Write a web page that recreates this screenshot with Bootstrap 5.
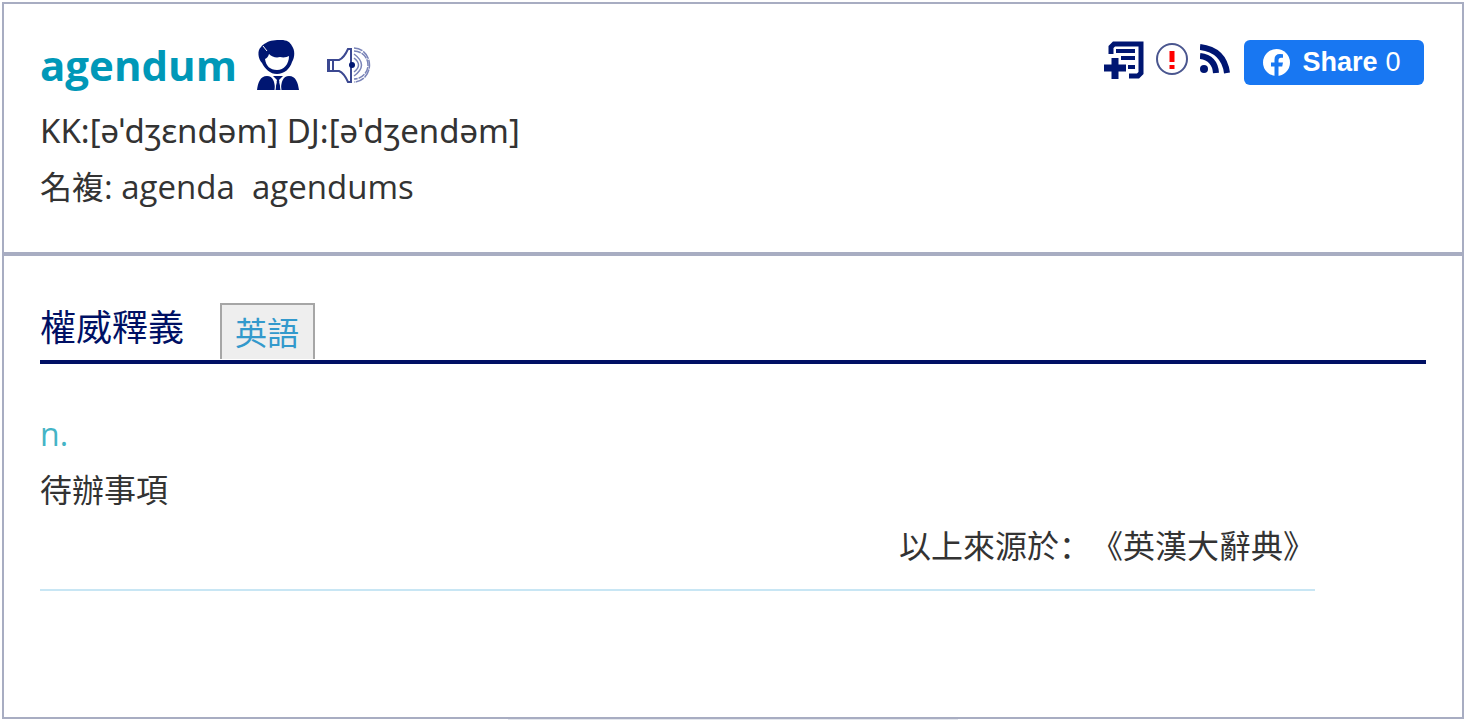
<!DOCTYPE html>
<html lang="zh-Hant">
<head>
<meta charset="utf-8">
<meta name="viewport" content="width=device-width, initial-scale=1">
<title>agendum</title>
<link href="https://cdn.jsdelivr.net/npm/bootstrap@5.3.0/dist/css/bootstrap.min.css" rel="stylesheet">
<script src="https://cdn.jsdelivr.net/npm/bootstrap@5.3.0/dist/js/bootstrap.bundle.min.js" defer></script>
<style>
  body {
    font-family: "Open Sans", "Noto Sans", "Noto Sans CJK TC", sans-serif;
    font-size: 32px;
    line-height: 56px;
    color: #333;
    background: #fff;
  }
  main { padding: 2px 14px 0 2px; }
  .entry { border: 2px solid #a8adc2; }
  .entry-head { padding: 36px 38px 37px 36px; border-bottom: 4px solid #a8adc2; }
  .entry-body { padding: 47px 36px 126px; }
  .headword { font-size: 42px; line-height: 50px; color: #0098b8; }
  .word-icons { margin-left: 20px; gap: 28px; }
  .tools { gap: 12px; }
  .phonetic { margin-top: 13px; font-family: "Noto Sans", sans-serif; font-size: 33px; }
  .latin { font-size: 33px; }
  .icon-btn { border: 0; padding: 0; background: none; line-height: 0; }
  .share-btn {
    height: 45px; width: 180px; padding: 0 4px 0 0; margin-left: 2px; border: 0; border-radius: 6px;
    background: #1877f2; color: #fff;
    font: 27px/45px "Liberation Sans", sans-serif;
  }
  .section-bar { gap: 36px; border-bottom: 4px solid #001064; }
  .section-name { font-size: 36px; line-height: 48px; color: #001064; }
  .lang-tab {
    height: 56px; margin-bottom: 1px; padding: 0 14px 0 13px; line-height: 56px;
    border: 2px solid #a6a6a6; border-bottom: 0; background: #eee; color: #3399cc;
  }
  .word-class { color: #44b4c6; }
  .sense { width: 92%; padding-top: 42px; padding-bottom: 15px; border-bottom: 2px solid #c8e6f4; }
  .source { text-spacing-trim: space-all; }
  .source [lang="zh-Hans"] { font-family: "Noto Sans CJK SC", sans-serif; line-height: 1; }
  .next-panel { width: 450px; height: 1px; background: #e4e7ed; }
</style>
</head>
<body>
<main>
<article class="entry">
  <section class="entry-head">
    <div class="d-flex justify-content-between align-items-start">
      <div class="d-flex align-items-center">
        <h1 class="headword fw-bold m-0">agendum</h1>
        <div class="word-icons d-flex align-items-center">
          <button class="icon-btn" type="button" aria-label="Profile">
            <svg width="42" height="50" viewBox="0 0 42 50" fill="#001672">
              <path d="M9 3C13 0 19 0 24 0c6 0 9 2 11 6 3 4 3 11 0 16-2 7-8 12-15 12S8 29 5 23C1 19 0 10 4 7c1-2 3-3 5-4Z"/>
              <path d="M8 19c2-1 3-2 4-5 3 3 7 4 11 3 4 1 7 0 9-1 0 8-5 14-12 14S9 26 8 19Z" fill="#fff"/>
              <path d="M6 6l4 5" fill="none" stroke="#fff" stroke-width="1"/>
              <path d="M0 50c1-7 3-14 10-14 6 0 8 6 8 14ZM42 50c-1-7-3-14-10-14-6 0-8 6-8 14ZM16 36h10l-4 4 2 10h-6l2-10Z"/>
              <path d="M19 42l-1 8M23 42l1 8" stroke="#fff" stroke-width="1"/>
            </svg>
          </button>
          <button class="icon-btn" type="button" aria-label="Play pronunciation">
            <svg width="44" height="40" viewBox="0 0 44 40" fill="none" stroke="#3b4891" stroke-width="2">
              <path d="M1 15h11q5-2 9-11h3v33h-3q-4-9-9-11H1ZM2 15v11M6 15v11"/>
              <circle cx="25" cy="20" r="3" fill="#001672" stroke="none"/>
              <g stroke="#7a84b8" stroke-width="1.500">
                <path d="M27 13q9 7 0 14"/>
                <path d="M27 9q15 11 0 22"/>
                <path d="M27 6a14 14 0 0 1 0 28" stroke-dasharray="7 1"/>
                <path d="M27 3a15.500 17 0 0 1 0 34" stroke-dasharray="9 1"/>
              </g>
            </svg>
          </button>
        </div>
      </div>
      <div class="tools d-flex align-items-start">
        <button class="icon-btn" type="button" aria-label="Add to word list">
          <svg width="40" height="40" viewBox="0 0 40 40" fill="none" stroke="#001672">
            <path d="M7 14V7l3-3h27v29l-3 3h-9" stroke-width="5"/>
            <path d="M12 11h19M17 18h14M24 27h7" stroke-width="4"/>
            <path d="M0 28h22M11 18v21" stroke-width="7"/>
          </svg>
        </button>
        <button class="icon-btn" type="button" aria-label="Report an error">
          <svg width="32" height="40" viewBox="0 0 32 40">
            <circle cx="16" cy="19" r="15" fill="none" stroke="#4a568f" stroke-width="2"/>
            <path d="M16 11v11M16 25v4" stroke="red" stroke-width="5"/>
          </svg>
        </button>
        <button class="icon-btn" type="button" aria-label="Subscribe">
          <svg width="30" height="40" viewBox="0 0 30 40" fill="none" stroke="#001672" stroke-width="6">
            <circle cx="4" cy="29" r="4" fill="#001672" stroke="none"/>
            <path d="M0 16q15 2 16 17M0 7q24 3 27 26"/>
          </svg>
        </button>
        <button class="share-btn d-flex align-items-center justify-content-center" type="button">
          <svg width="27" height="27" viewBox="0 0 27 27">
            <circle cx="13.500" cy="13.500" r="13.500" fill="#fff"/>
            <path d="M11.500 27v-9.500H8v-4h3.500v-3q0-5.500 5.500-5.500l3 .3v3.400h-2q-2.500 0-2.500 2.500v2.300H20l-.8 4h-3.700V27Z" fill="#1877f2"/>
          </svg>
          <strong class="ms-2 ps-1 me-2">Share</strong><span>0</span>
        </button>
      </div>
    </div>
    <div class="phonetic">KK:[əˈdʒɛndəm] DJ:[əˈdʒendəm]</div>
    <div>名複<span class="latin">: agenda&nbsp; agendums</span></div>
  </section>
  <section class="entry-body">
    <div class="section-bar d-flex align-items-end">
      <h2 class="section-name fw-normal m-0 mb-2">權威釋義</h2>
      <a class="lang-tab text-decoration-none" href="#">英語</a>
    </div>
    <div class="sense">
      <div class="word-class">n.</div>
      <div>待辦事項</div>
      <div class="source text-end">以上來源於<span lang="zh-Hans">：</span>《英漢大辭典》</div>
    </div>
  </section>
</article>
<div class="next-panel mx-auto"></div>
</main>
</body>
</html>
